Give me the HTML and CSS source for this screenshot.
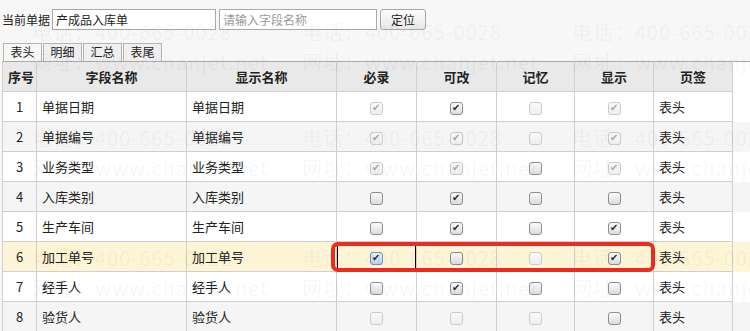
FILE: index.html
```html
<!DOCTYPE html>
<html lang="zh-CN">
<head>
    <meta charset="UTF-8">
    <title>单据字段设置</title>
    <link rel="stylesheet" href="styles.css">
</head>
<body>
    <div class="toolbar">
        <span class="label">当前单据</span>
        <input class="field doc" type="text" value="产成品入库单">
        <input class="field search" type="text" placeholder="请输入字段名称">
        <button class="locate">定位</button>
    </div>

    <div class="tabs">
        <div class="tab active">表头</div>
        <div class="tab">明细</div>
        <div class="tab">汇总</div>
        <div class="tab">表尾</div>
    </div>

    <table class="grid">
        <colgroup>
            <col class="c-no"><col class="c-name"><col class="c-name">
            <col class="c-flag"><col class="c-flag"><col class="c-flag2"><col class="c-flag3"><col class="c-tab"><col>
        </colgroup>
        <thead>
            <tr>
                <th>序号</th><th>字段名称</th><th>显示名称</th><th>必录</th><th>可改</th><th>记忆</th><th>显示</th><th>页签</th><th class="fill"></th>
            </tr>
        </thead>
        <tbody>
            <tr>
                <td class="no">1</td><td>单据日期</td><td>单据日期</td>
                <td class="ck"><input class="cb" type="checkbox" checked disabled></td>
                <td class="ck"><input class="cb" type="checkbox" checked></td>
                <td class="ck"><input class="cb" type="checkbox" disabled></td>
                <td class="ck"><input class="cb" type="checkbox" checked disabled></td>
                <td>表头</td><td class="fill"></td>
            </tr>
            <tr>
                <td class="no">2</td><td>单据编号</td><td>单据编号</td>
                <td class="ck"><input class="cb" type="checkbox" checked disabled></td>
                <td class="ck"><input class="cb" type="checkbox" checked disabled></td>
                <td class="ck"><input class="cb" type="checkbox" disabled></td>
                <td class="ck"><input class="cb" type="checkbox" checked disabled></td>
                <td>表头</td><td class="fill"></td>
            </tr>
            <tr>
                <td class="no">3</td><td>业务类型</td><td>业务类型</td>
                <td class="ck"><input class="cb" type="checkbox" checked disabled></td>
                <td class="ck"><input class="cb" type="checkbox" checked disabled></td>
                <td class="ck"><input class="cb" type="checkbox"></td>
                <td class="ck"><input class="cb" type="checkbox" checked disabled></td>
                <td>表头</td><td class="fill"></td>
            </tr>
            <tr>
                <td class="no">4</td><td>入库类别</td><td>入库类别</td>
                <td class="ck"><input class="cb" type="checkbox"></td>
                <td class="ck"><input class="cb" type="checkbox" checked></td>
                <td class="ck"><input class="cb" type="checkbox"></td>
                <td class="ck"><input class="cb" type="checkbox"></td>
                <td>表头</td><td class="fill"></td>
            </tr>
            <tr>
                <td class="no">5</td><td>生产车间</td><td>生产车间</td>
                <td class="ck"><input class="cb" type="checkbox"></td>
                <td class="ck"><input class="cb" type="checkbox" checked></td>
                <td class="ck"><input class="cb" type="checkbox"></td>
                <td class="ck"><input class="cb" type="checkbox" checked></td>
                <td>表头</td><td class="fill"></td>
            </tr>
            <tr class="current">
                <td class="no">6</td><td>加工单号</td><td>加工单号</td>
                <td class="ck selected"><input class="cb focus" type="checkbox" checked></td>
                <td class="ck"><input class="cb" type="checkbox"></td>
                <td class="ck"><input class="cb" type="checkbox" disabled></td>
                <td class="ck"><input class="cb" type="checkbox" checked></td>
                <td>表头</td><td class="fill"></td>
            </tr>
            <tr>
                <td class="no">7</td><td>经手人</td><td>经手人</td>
                <td class="ck"><input class="cb" type="checkbox"></td>
                <td class="ck"><input class="cb" type="checkbox" checked></td>
                <td class="ck"><input class="cb" type="checkbox"></td>
                <td class="ck"><input class="cb" type="checkbox"></td>
                <td>表头</td><td class="fill"></td>
            </tr>
            <tr>
                <td class="no">8</td><td>验货人</td><td>验货人</td>
                <td class="ck"><input class="cb" type="checkbox" disabled></td>
                <td class="ck"><input class="cb" type="checkbox" disabled></td>
                <td class="ck"><input class="cb" type="checkbox" disabled></td>
                <td class="ck"><input class="cb" type="checkbox"></td>
                <td>表头</td><td class="fill"></td>
            </tr>
        </tbody>
    </table>

    <!-- red annotation box drawn over the current row -->
    <div class="mark"></div>

    <!-- faint watermark over the screenshot -->
    <div class="watermark">
        <span class="wm" style="left:32px;top:20px">电话：400-665-0028</span>
        <span class="wm" style="left:302px;top:20px">电话：400-665-0028</span>
        <span class="wm" style="left:572px;top:20px">电话：400-665-0028</span>
        <span class="wm" style="left:32px;top:50px">网址：www.chanjet.net</span>
        <span class="wm" style="left:302px;top:50px">网址：www.chanjet.net</span>
        <span class="wm" style="left:572px;top:50px">网址：www.chanjet.net</span>
        <span class="wm" style="left:32px;top:126px">电话：400-665-0028</span>
        <span class="wm" style="left:302px;top:126px">电话：400-665-0028</span>
        <span class="wm" style="left:572px;top:126px">电话：400-665-0028</span>
        <span class="wm" style="left:32px;top:156px">网址：www.chanjet.net</span>
        <span class="wm" style="left:302px;top:156px">网址：www.chanjet.net</span>
        <span class="wm" style="left:572px;top:156px">网址：www.chanjet.net</span>
        <span class="wm" style="left:32px;top:246px">电话：400-665-0028</span>
        <span class="wm" style="left:302px;top:246px">电话：400-665-0028</span>
        <span class="wm" style="left:572px;top:246px">电话：400-665-0028</span>
        <span class="wm" style="left:32px;top:276px">网址：www.chanjet.net</span>
        <span class="wm" style="left:302px;top:276px">网址：www.chanjet.net</span>
        <span class="wm" style="left:572px;top:276px">网址：www.chanjet.net</span>
    </div>
</body>
</html>
```

FILE: styles.css
```css
body {
    margin: 0;
    background: #f7f7f7;
    font-family: "Noto Sans CJK SC", "Liberation Sans", sans-serif;
    font-size: 12px;
    color: #222;
    position: relative;
    overflow: hidden;
}
.toolbar {
    display: flex;
    align-items: center;
    padding: 9px 0 0 2px;
    height: 21px;
}
.label {
    margin-right: 2px;
    line-height: 21px;
}
.field {
    box-sizing: border-box;
    height: 21px;
    border: 1px solid #a9a9a9;
    background: #fff;
    padding: 0 3px;
    font-family: inherit;
    font-size: 12px;
    color: #222;
    outline: none;
    margin: 0 3px 0 0;
}
.field.doc {
    width: 164px;
}
.field.search {
    width: 158px;
}
.field::placeholder {
    color: #9a9a9a;
}
.locate {
    box-sizing: border-box;
    width: 46px;
    height: 21px;
    padding: 0;
    border: 1px solid #a6a6a6;
    border-radius: 3px;
    background: linear-gradient(#fcfcfc, #e8e8e8);
    font-family: inherit;
    font-size: 12px;
    color: #222;
}
.tabs {
    display: flex;
    gap: 1px;
    padding-left: 3px;
    margin-top: 13px;
}
.tab {
    box-sizing: border-box;
    width: 39px;
    height: 18px;
    line-height: 16px;
    text-align: center;
    border: 1px solid #b5b5b5;
    border-bottom: none;
    background: #efefef;
    font-size: 12px;
}
.tab.active {
    background: #f6f6f6;
}
.grid {
    margin-left: 2px;
    width: 748px;
    table-layout: fixed;
    border-collapse: collapse;
    border-top: 1px solid #a9a9a9;
    font-size: 13px;
}
.c-no { width: 34px; }
.c-name { width: 150px; }
.c-flag { width: 80px; }
.c-flag2 { width: 78px; }
.c-flag3 { width: 79px; }
.c-tab { width: 79px; }
.grid th,
.grid td {
    box-sizing: border-box;
    height: 30px;
    padding: 0 5px;
    border: 1px solid #cfcfcf;
    white-space: nowrap;
    overflow: hidden;
}
.grid th {
    background: #e9e9e9;
    font-weight: bold;
    text-align: center;
    border-top: none;
}
.grid td {
    background: #fff;
}
.grid tbody tr:nth-child(even) td {
    background: #f5f5f5;
}
.grid tbody tr.current td {
    background: #fdf5d6;
}
.grid th.fill,
.grid td.fill {
    border-top: none;
    border-bottom: none;
    border-right: none;
}
.grid th.fill {
    background: #fff;
}
.grid td.no,
.grid td.ck {
    text-align: center;
}
.grid td.selected {
    box-shadow: inset 1px 0 0 #000, inset 0 -1px 0 #000, inset -1px 0 0 #000;
}
.cb {
    appearance: none;
    -webkit-appearance: none;
    box-sizing: border-box;
    width: 13px;
    height: 13px;
    margin: 0;
    vertical-align: middle;
    border: 1px solid #8e8e8e;
    border-radius: 3px;
    background: linear-gradient(#fbfbfb, #dcdcdc);
    position: relative;
}
.cb:checked::before {
    content: "✔";
    position: absolute;
    left: 1px;
    top: -3px;
    font-size: 10px;
    line-height: 16px;
    color: #2a2a2a;
}
.cb:disabled {
    border-color: #cbcbcb;
    background: linear-gradient(#fafafa, #eeeeee);
}
.cb:disabled:checked::before {
    color: #a8a8a8;
}
.cb.focus {
    border-color: #6f8fc7;
    background: linear-gradient(#e8f0fb, #bcd0ec);
}
.mark {
    position: absolute;
    left: 331px;
    top: 242px;
    width: 324px;
    height: 30px;
    box-sizing: border-box;
    border: 4px solid #ec2a1f;
    border-radius: 7px;
    pointer-events: none;
}
.watermark {
    position: absolute;
    inset: 0;
    overflow: hidden;
    pointer-events: none;
}
.wm {
    position: absolute;
    font-family: "Noto Sans CJK SC", sans-serif;
    font-size: 20px;
    line-height: 24px;
    letter-spacing: 1px;
    color: rgba(0, 0, 0, 0.05);
    white-space: nowrap;
}
```
